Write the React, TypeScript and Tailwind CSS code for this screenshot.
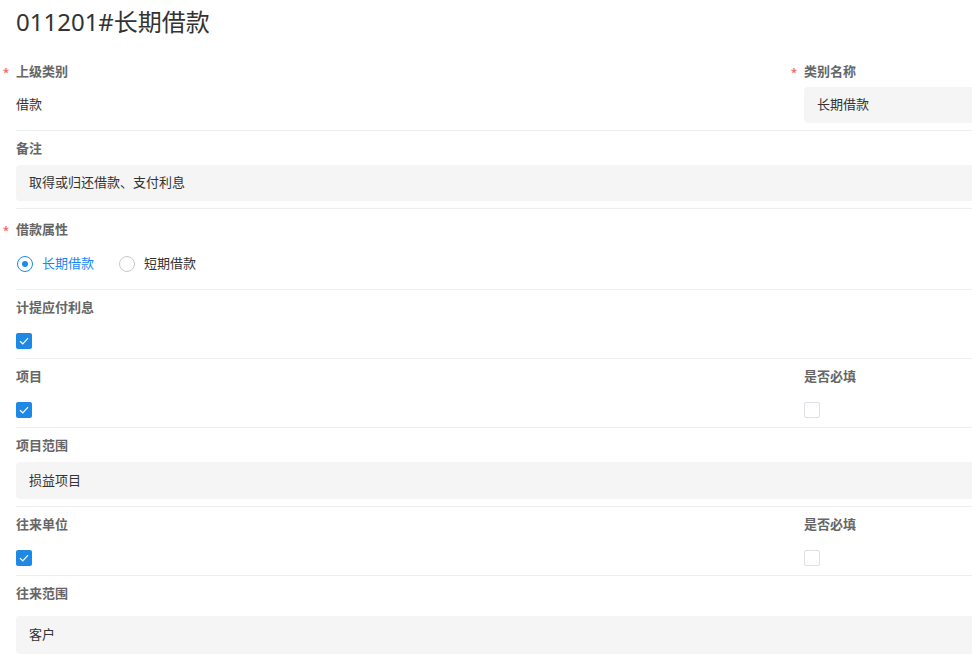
import React from "react";

const font = { fontFamily: '"Noto Sans", "Noto Sans CJK SC", sans-serif' };

function Req() {
  return <span className="absolute -left-[13px] top-[1px] text-[11px] text-[#f56c6c]">*</span>;
}

function Label({ text, required }: { text: string; required?: boolean }) {
  return (
    <div className="relative text-[13px] leading-5 font-bold text-[#666]">
      {required && <Req />}
      {text}
    </div>
  );
}

function Box({ value, tall }: { value: string; tall?: boolean }) {
  return (
    <div
      className={`mt-[7px] flex ${tall ? "h-[37px]" : "h-9"} items-center rounded bg-[#f5f5f5] pl-[13px] text-[13px] text-[#333]`}
    >
      {value}
    </div>
  );
}

function Check({ on }: { on: boolean }) {
  return on ? (
    <div className="mt-4 flex h-4 w-4 items-center justify-center rounded-[2px] bg-[#1e88e5]">
      <svg width="10" height="8" viewBox="0 0 10 8" fill="none">
        <path d="M1 4.2L3.8 6.8L9 1.2" stroke="#fff" strokeWidth="1.2" />
      </svg>
    </div>
  ) : (
    <div className="mt-4 h-4 w-4 rounded-[2px] border border-[#dcdfe6] bg-white" />
  );
}

function Radio({ label, on }: { label: string; on: boolean }) {
  return (
    <label className="flex items-center gap-[9px] text-[13px]">
      <span
        className={`flex h-4 w-4 items-center justify-center rounded-full border ${on ? "border-[#1989fa]" : "border-[#c8c9cc]"}`}
      >
        {on && <span className="h-[6px] w-[6px] rounded-full bg-[#1989fa]" />}
      </span>
      <span className={on ? "text-[#1989fa]" : "text-[#333]"}>{label}</span>
    </label>
  );
}

function Row({ children, last, className = "" }: { children: React.ReactNode; last?: boolean; className?: string }) {
  return (
    <div className={`grid grid-cols-[788px_788px] ${last ? "" : "border-b border-[#eeeeee]"} ${className}`}>
      {children}
    </div>
  );
}

export default function App() {
  return (
    <div className="h-[661px] w-[972px] overflow-hidden bg-white" style={font}>
      <div className="w-[1600px] pl-4">
        <h1 className="pt-[6px] text-[24px] leading-8 text-[#333]">011201#长期借款</h1>

        <div className="mt-4">
          <Row className="pt-[7px] pb-[7px]">
            <div>
              <Label text="上级类别" required />
              <div className="mt-[6px] flex h-9 items-center text-[13px] text-[#333]">借款</div>
            </div>
            <div>
              <Label text="类别名称" required />
              <div className="mt-[6px] flex h-9 items-center rounded bg-[#f5f5f5] pl-[13px] text-[13px] text-[#333]">
                长期借款
              </div>
            </div>
          </Row>

          <Row className="pt-[7px] pb-[7px]">
            <div className="col-span-2">
              <Label text="备注" />
              <Box value="取得或归还借款、支付利息" />
            </div>
          </Row>

          <Row className="pt-[10px] pb-[7px]">
            <div>
              <Label text="借款属性" required />
              <div className="mt-[7px] flex h-9 items-center gap-[25px] pl-px">
                <Radio label="长期借款" on />
                <Radio label="短期借款" on={false} />
              </div>
            </div>
          </Row>

          <Row className="pt-[7px] pb-[9px]">
            <div>
              <Label text="计提应付利息" />
              <Check on />
            </div>
          </Row>

          <Row className="pt-[7px] pb-[9px]">
            <div>
              <Label text="项目" />
              <Check on />
            </div>
            <div>
              <Label text="是否必填" />
              <Check on={false} />
            </div>
          </Row>

          <Row className="pt-[7px] pb-[7px]">
            <div className="col-span-2">
              <Label text="项目范围" />
              <Box value="损益项目" tall />
            </div>
          </Row>

          <Row className="pt-[7px] pb-[9px]">
            <div>
              <Label text="往来单位" />
              <Check on />
            </div>
            <div>
              <Label text="是否必填" />
              <Check on={false} />
            </div>
          </Row>

          <Row last className="pt-[7px]">
            <div className="col-span-2">
              <Label text="往来范围" />
              <div className="mt-[13px] flex h-[38px] items-center rounded bg-[#f5f5f5] pl-[13px] text-[13px] text-[#333]">
                客户
              </div>
            </div>
          </Row>
        </div>
      </div>
    </div>
  );
}
